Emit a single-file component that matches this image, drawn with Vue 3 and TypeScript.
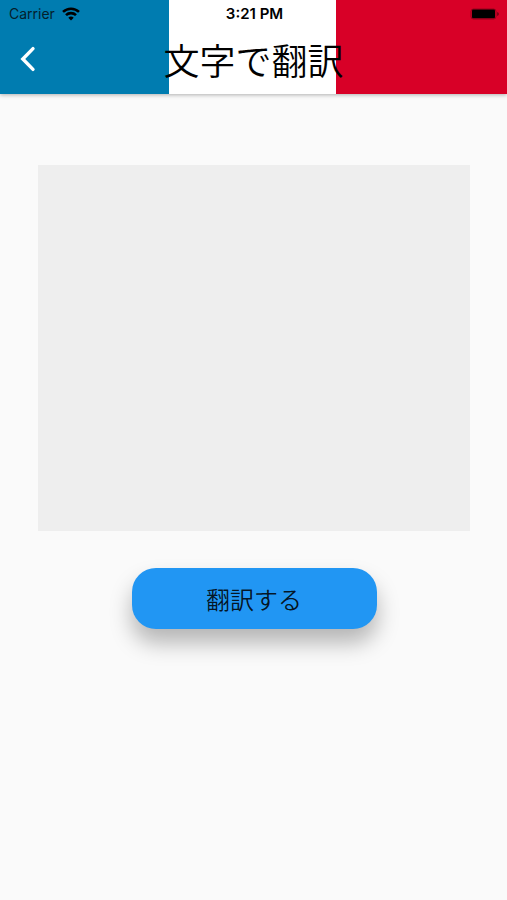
<script setup lang="ts">
import { ref } from 'vue'

const text = ref('')
</script>

<template>
  <div class="screen">
    <header class="app-bar">
      <div class="status-bar">
        <div class="status-left">
          <span>Carrier</span>
          <svg class="wifi" width="18" height="14" viewBox="0 0 18 14" fill="none" stroke="currentColor" stroke-width="2.6" aria-hidden="true">
            <path d="M1 4.9C5.5 .7 12.5 .7 17 4.9" />
            <path d="M4 8.1C6.8 5.4 11.2 5.4 14 8.1" />
            <path d="M9 13.4L6.3 10.7C7.8 9.2 10.2 9.2 11.7 10.7Z" fill="currentColor" stroke="none" />
          </svg>
        </div>
        <span class="time">3:21 PM</span>
        <svg class="battery" width="30" height="12" viewBox="0 0 30 12" aria-hidden="true">
          <rect x="1" y="1" width="25" height="10" rx="2.5" fill="none" stroke="#000" stroke-opacity=".3" />
          <rect x="2" y="1.6" width="23" height="8.6" rx="1.2" fill="#000" />
          <path d="M27 4Q29 4.5 29 6T27 8Z" fill="#000" fill-opacity=".4" />
        </svg>
      </div>
      <div class="toolbar">
        <button class="back" type="button" aria-label="戻る">
          <svg width="16" height="26" viewBox="0 0 16 26" fill="none" stroke="#fff" stroke-width="3.4" stroke-linecap="round" aria-hidden="true">
            <path d="M13 2.6L2.8 13L13 23.4" />
          </svg>
        </button>
        <h1>文字で翻訳</h1>
      </div>
    </header>
    <main>
      <textarea v-model="text" aria-label="翻訳する文字"></textarea>
      <button class="translate" type="button">翻訳する</button>
    </main>
  </div>
</template>

<style>
body {
  background: #fafafa;
}
</style>

<style scoped>
.screen {
  min-height: 100vh;
  background: #fafafa;
  font-family: Inter, "Noto Sans CJK JP", sans-serif;
  color: #000;
}

.app-bar {
  height: 94px;
  background: linear-gradient(to right, #007cb0 33.3%, #fff 33.3% 66.3%, #d80027 66.3%);
  box-shadow: 0 1px 4px rgba(0, 0, 0, 0.3);
}

.status-bar {
  display: grid;
  grid-template-columns: 1fr auto 1fr;
  align-items: center;
  height: 27px;
  padding: 0 7px 0 9px;
  font-size: 14px;
}

.status-left {
  display: flex;
  align-items: center;
  gap: 7px;
  color: #04202c;
}

.wifi {
  color: #000;
}

.time {
  font-size: 15px;
  font-weight: 600;
}

.battery {
  justify-self: end;
}

.toolbar {
  display: grid;
  grid-template-columns: 56px 1fr 56px;
  align-items: center;
  height: 64px;
}

.back {
  display: flex;
  align-items: center;
  justify-content: center;
  height: 56px;
  padding: 0;
  border: 0;
  background: none;
}

h1 {
  margin: 0;
  font-family: "Noto Sans CJK JP", sans-serif;
  font-size: 36px;
  font-weight: 350;
  line-height: 56px;
  text-align: center;
  white-space: nowrap;
}

main {
  display: flex;
  flex-direction: column;
  align-items: center;
  gap: 37px;
  padding: 71px 37px 40px 38px;
}

textarea {
  box-sizing: border-box;
  width: 100%;
  height: 366px;
  padding: 12px;
  border: 0;
  outline: 0;
  resize: none;
  background: #eee;
  font: inherit;
  font-size: 20px;
}

.translate {
  width: 245px;
  height: 61px;
  padding: 0;
  border: 0;
  border-radius: 24px;
  background: #2196f3;
  box-shadow: 0 14px 22px rgba(0, 0, 0, 0.28);
  color: rgba(0, 0, 0, 0.87);
  font-family: "Noto Sans CJK JP", sans-serif;
  font-size: 24px;
  font-weight: 350;
}
</style>
